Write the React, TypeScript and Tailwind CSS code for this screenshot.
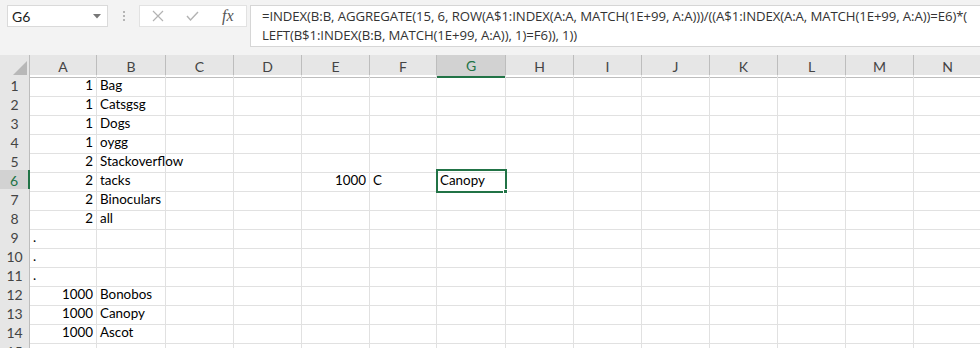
import React from 'react';

const COLS = ['A', 'B', 'C', 'D', 'E', 'F', 'G', 'H', 'I', 'J', 'K', 'L', 'M', 'N'];

// cell contents keyed by "col+row", right means number (right aligned)
const CELLS: Record<string, { v: string; right?: boolean }> = {
    A1: { v: '1', right: true }, B1: { v: 'Bag' },
    A2: { v: '1', right: true }, B2: { v: 'Catsgsg' },
    A3: { v: '1', right: true }, B3: { v: 'Dogs' },
    A4: { v: '1', right: true }, B4: { v: 'oygg' },
    A5: { v: '2', right: true }, B5: { v: 'Stackoverflow' },
    A6: { v: '2', right: true }, B6: { v: 'tacks' },
    A7: { v: '2', right: true }, B7: { v: 'Binoculars' },
    A8: { v: '2', right: true }, B8: { v: 'all' },
    A9: { v: '.' }, A10: { v: '.' }, A11: { v: '.' },
    A12: { v: '1000', right: true }, B12: { v: 'Bonobos' },
    A13: { v: '1000', right: true }, B13: { v: 'Canopy' },
    A14: { v: '1000', right: true }, B14: { v: 'Ascot' },
    E6: { v: '1000', right: true }, F6: { v: 'C' },
    G6: { v: 'Canopy' },
};

const ROWS = Array.from({ length: 15 }, (_, i) => i + 1);

const gridCols = 'grid grid-cols-[30px_67px_69px_68px_68px_68px_67px_69px_68px_68px_68px_68px_68px_68px_68px]';

const FormulaBar = () => (
    <div className="h-[55px] bg-[#f3f3f3] relative flex items-start pt-[5px] pl-[7px]">
        {/* name box */}
        <div className="w-[101px] h-[22px] bg-white border border-[#dadada] flex items-center justify-between pl-[4px] pr-[6px] text-[14px] text-[#222]">
            <span>G6</span>
            <svg width="8" height="5" viewBox="0 0 8 5"><path d="M0 0 L8 0 L4 4.5 Z" fill="#777" /></svg>
        </div>
        {/* grip dots */}
        <div className="w-[31px] h-[22px] flex flex-col items-center justify-center gap-[2px]">
            <span className="w-[2px] h-[2px] bg-[#b5b5b5]" />
            <span className="w-[2px] h-[2px] bg-[#b5b5b5]" />
            <span className="w-[2px] h-[2px] bg-[#b5b5b5]" />
        </div>
        {/* cancel / enter / fx */}
        <div className="w-[108px] h-[22px] bg-white border border-[#e2e2e2] flex items-center">
            <svg className="ml-[12px]" width="12" height="12" viewBox="0 0 12 12"><path d="M1 1 L11 11 M11 1 L1 11" stroke="#b3b3b3" strokeWidth="1.2" /></svg>
            <svg className="ml-[22px]" width="13" height="10" viewBox="0 0 13 10"><path d="M1 5 L4.5 9 L12 1" stroke="#b3b3b3" strokeWidth="1.4" fill="none" /></svg>
            <span className="ml-[23px] text-[16px] italic text-[#555] font-['Liberation_Serif',serif] leading-none">fx</span>
        </div>
        {/* formula text */}
        <div className="ml-[3px] flex-1 h-[42px] bg-white border border-[#d6d6d6] border-r-0 pl-[11px] pt-[1px] overflow-hidden text-[13.2px] tracking-[-0.1px] leading-[19px] text-[#333] font-['Open_Sans',sans-serif] whitespace-nowrap">
            <div>=INDEX(B:B, AGGREGATE(15, 6, ROW(A$1:INDEX(A:A, MATCH(1E+99, A:A)))/((A$1:INDEX(A:A, MATCH(1E+99, A:A))=E6)*(</div>
            <div>LEFT(B$1:INDEX(B:B, MATCH(1E+99, A:A)), 1)=F6)), 1))</div>
        </div>
    </div>
);

export default function App() {
    return (
        <div className="w-[980px] h-[348px] overflow-hidden bg-white font-['Lato',sans-serif] text-black">
            <FormulaBar />
            {/* column header row */}
            <div className={`${gridCols} h-[20px] bg-[#e6e6e6]`}>
                <div className="border-r border-b border-[#bdbdbd] flex items-end justify-end pr-[2px] pb-[2px]">
                    <svg width="14" height="14" viewBox="0 0 14 14"><path d="M14 0 L14 14 L0 14 Z" fill="#b8b8b8" /></svg>
                </div>
                {COLS.map((c) => (
                    <div
                        key={c}
                        className={
                            c === 'G'
                                ? 'bg-[#d2d2d2] border-r border-[#bdbdbd] border-b-2 border-b-[#217346] flex items-center justify-center text-[14px] text-[#217346]'
                                : 'border-r border-b border-[#bdbdbd] flex items-center justify-center text-[14px] text-[#444]'
                        }
                    >
                        {c}
                    </div>
                ))}
            </div>
            {ROWS.map((r) => (
                <div key={r} className={`${gridCols} h-[19px]`}>
                    <div
                        className={
                            r === 6
                                ? 'bg-[#d2d2d2] border-r-2 border-r-[#217346] border-b border-b-[#c6c6c6] flex items-center justify-center text-[14px] text-[#217346]'
                                : 'bg-[#e6e6e6] border-r border-r-[#bdbdbd] border-b border-b-[#d0d0d0] flex items-center justify-center text-[14px] text-[#444]'
                        }
                    >
                        {r}
                    </div>
                    {COLS.map((c) => {
                        const cell = CELLS[c + r];
                        const sel = c === 'G' && r === 6;
                        return (
                            <div
                                key={c}
                                className={`relative border-r border-b border-[#e1e1e1] flex items-center whitespace-nowrap text-[13.4px] leading-none px-[3px] ${
                                    cell?.right ? 'justify-end' : 'justify-start'
                                } ${sel ? 'outline-2 outline-[#217346] -outline-offset-1 z-10' : ''}`}
                            >
                                {cell?.v}
                                {sel && <span className="absolute -right-[3px] -bottom-[3px] w-[5px] h-[5px] bg-[#217346] border border-white" />}
                            </div>
                        );
                    })}
                </div>
            ))}
        </div>
    );
}
